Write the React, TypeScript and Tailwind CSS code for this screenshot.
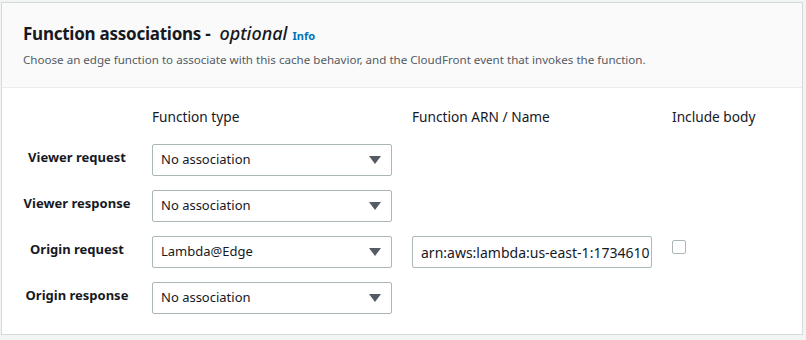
import React from 'react';

const rows = [
  { label: 'Viewer request', value: 'No association' },
  { label: 'Viewer response', value: 'No association' },
  { label: 'Origin request', value: 'Lambda@Edge', arn: 'arn:aws:lambda:us-east-1:1734610' },
  { label: 'Origin response', value: 'No association' },
];

function Select({ value }: { value: string }) {
  return (
    <div className="flex h-[32px] w-[240px] items-center justify-between rounded-[2px] border border-[#aab7b8] bg-white pl-[8px] pr-[10px] text-[13px] text-[#16191f]">
      <span>{value}</span>
      <svg width="12" height="8" viewBox="0 0 12 8">
        <polygon points="0,0 12,0 6,8" fill="#545b64" />
      </svg>
    </div>
  );
}

export default function App() {
  return (
    <div className="h-[340px] w-[806px] bg-[#f2f3f3] pl-[1px] pt-[2px] font-['Noto_Sans',sans-serif]">
      <div className="w-[802px] border border-[#d5dbdb] bg-white">
        <div className="h-[85px] border-b border-[#eaeded] bg-[#fafafa] pl-[21px] pt-[18px]">
          <h2 className="flex items-baseline text-[17px] font-bold leading-[24px] tracking-[-0.25px] text-[#16191f]">
            <span>Function associations -</span>
            <i className="ml-[9px] text-[18px] font-medium tracking-normal">optional</i>
            <span className="ml-[5px] text-[11px] font-bold tracking-normal text-[#0073bb]">Info</span>
          </h2>
          <p className="mt-[4px] text-[11.6px] leading-[16px] text-[#545b64]">
            Choose an edge function to associate with this cache behavior, and the CloudFront event that invokes the function.
          </p>
        </div>
        <div className="grid grid-cols-[130px_240px_240px_1fr] gap-x-[20px] pb-[20px] pt-[19px] text-[13.7px] text-[#16191f]">
          <div />
          <div className="h-[20px] leading-[20px]">Function type</div>
          <div className="h-[20px] leading-[20px]">Function ARN / Name</div>
          <div className="h-[20px] leading-[20px]">Include body</div>
          {rows.map((r, i) => (
            <React.Fragment key={r.label}>
              <div className={`${i === 0 ? 'mt-[17px]' : 'mt-[14px]'} flex h-[32px] items-start justify-center whitespace-nowrap pl-[20px] pt-[4px] text-[13px] font-bold`}>
                {r.label}
              </div>
              <div className={i === 0 ? 'mt-[17px]' : 'mt-[14px]'}>
                <Select value={r.value} />
              </div>
              <div className={i === 0 ? 'mt-[17px]' : 'mt-[14px]'}>
                {r.arn && (
                  <div className="flex h-[32px] w-[240px] items-center overflow-hidden whitespace-nowrap rounded-[2px] border border-[#aab7b8] bg-white pl-[8px] text-[14px]">
                    {r.arn}
                  </div>
                )}
              </div>
              <div className={i === 0 ? 'mt-[17px]' : 'mt-[14px]'}>
                {r.arn && (
                  <div className="mt-[4px] h-[14px] w-[14px] rounded-[2px] border border-[#aab7b8] bg-white" />
                )}
              </div>
            </React.Fragment>
          ))}
        </div>
      </div>
    </div>
  );
}
